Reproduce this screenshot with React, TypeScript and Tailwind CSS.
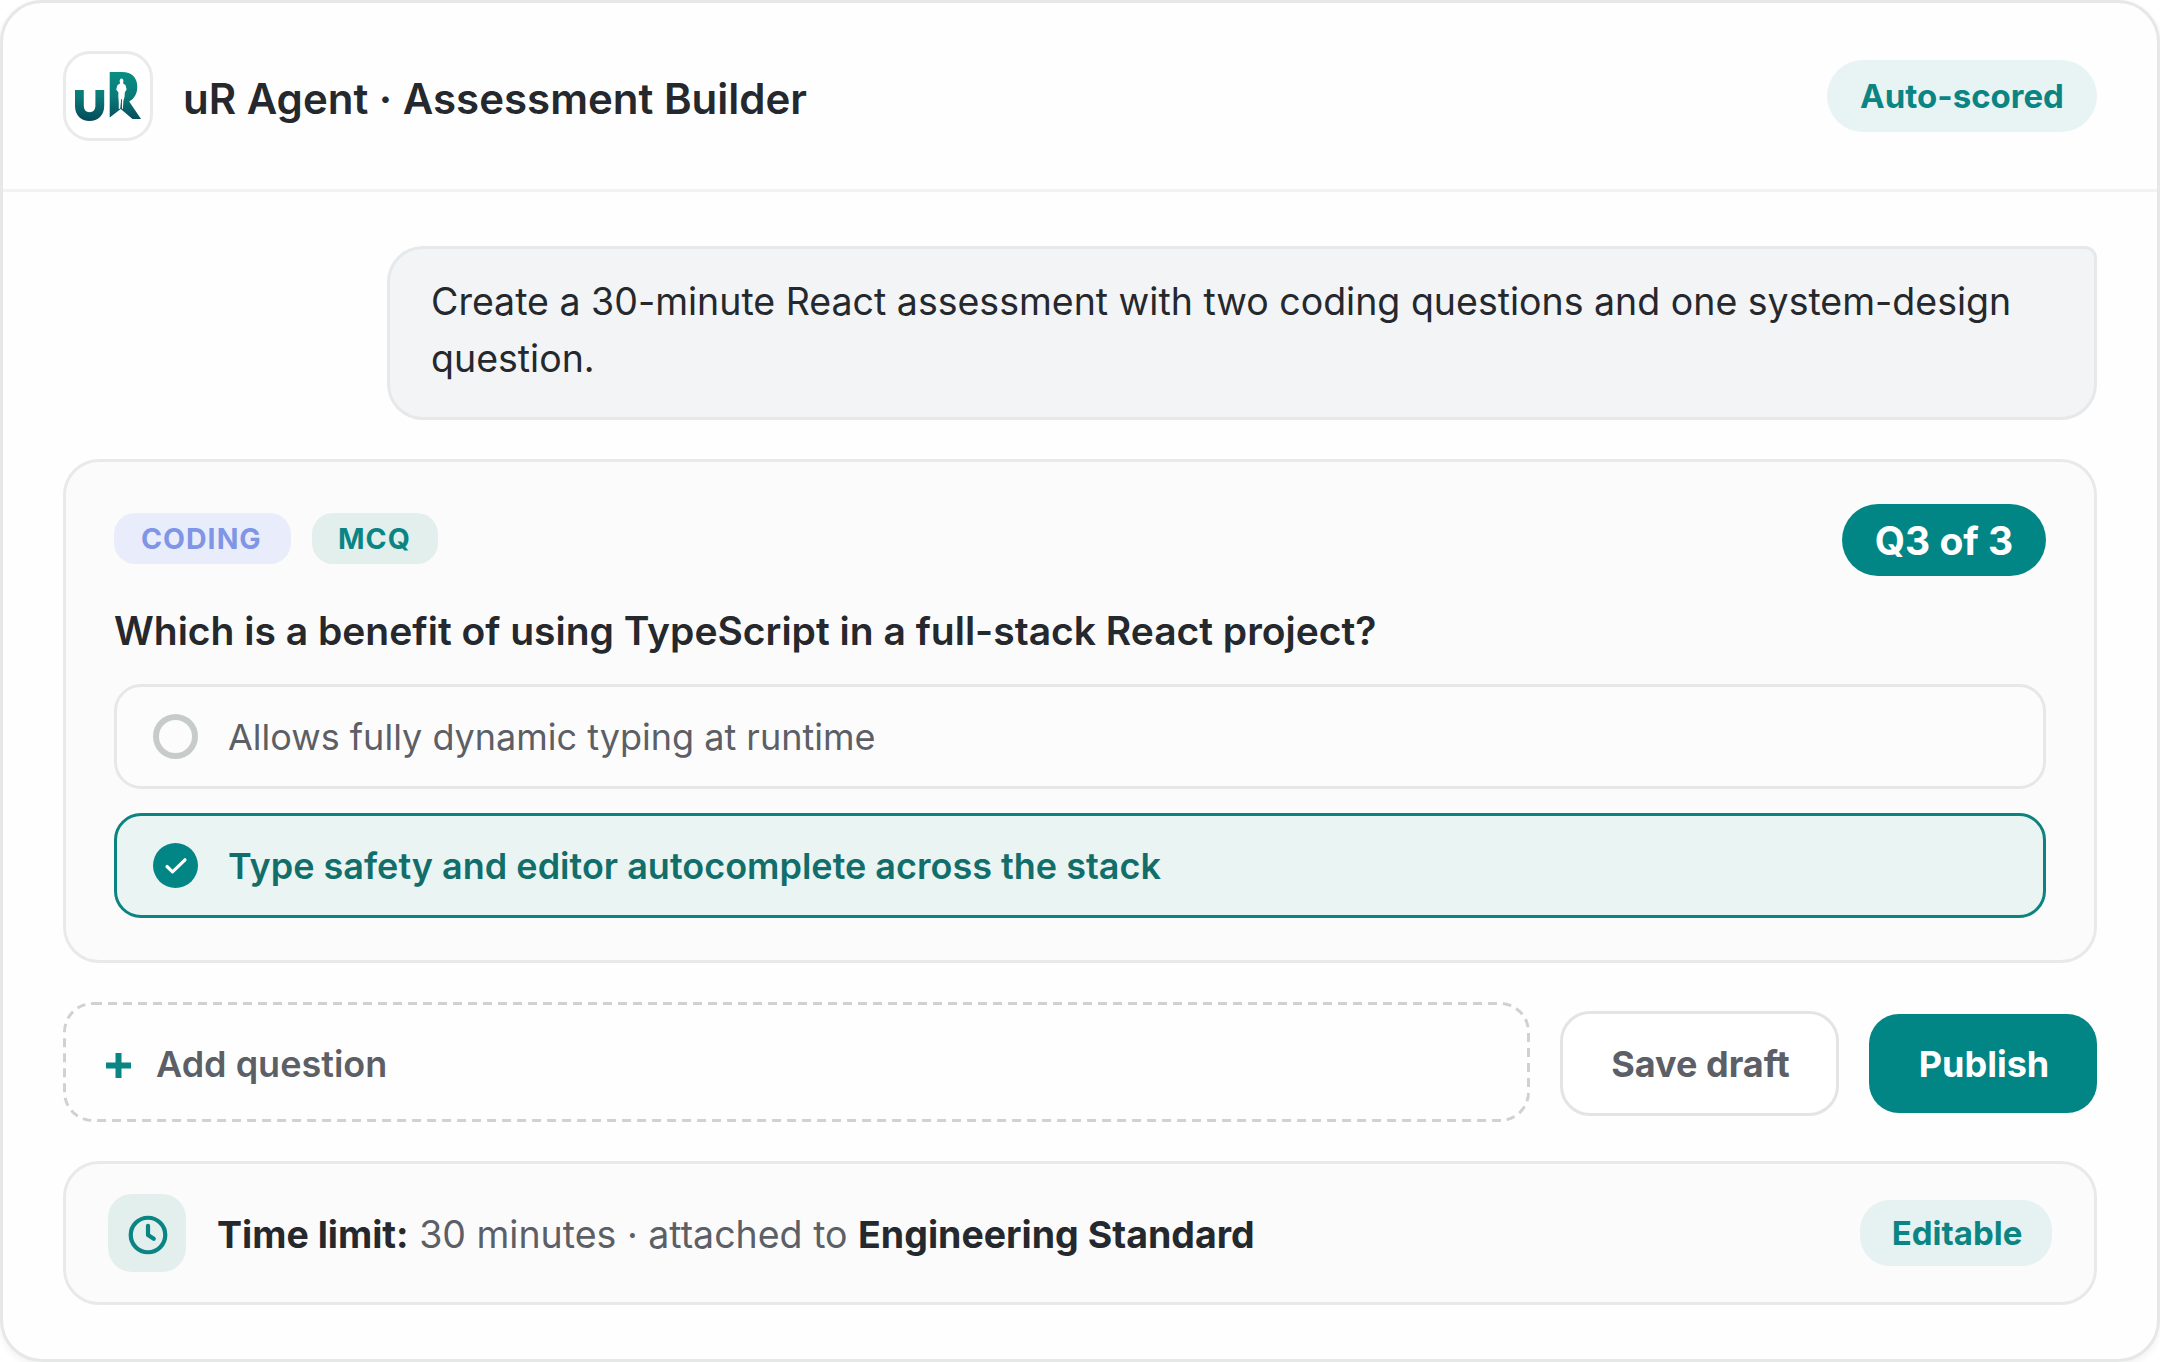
import type { ReactNode } from "react";

type Option = {
  label: string;
  selected: boolean;
};

const options: Option[] = [
  { label: "Allows fully dynamic typing at runtime", selected: false },
  { label: "Type safety and editor autocomplete across the stack", selected: true },
];

function Logo() {
  return (
    <svg viewBox="0 0 66 49" className="h-[49px] w-[66px]" aria-hidden="true">
      <defs>
        <linearGradient id="mark" x1="0" y1="0" x2="0" y2="49" gradientUnits="userSpaceOnUse">
          <stop offset="0" stopColor="#098e84" />
          <stop offset="0.5" stopColor="#0b7a78" />
          <stop offset="1" stopColor="#044a5a" />
        </linearGradient>
      </defs>
      <path
        d="M0 18H8.800V33.500C8.800 37.800 11 40.200 14.600 40.200C18.200 40.200 20.400 37.800 20.400 33.500V18H29.200V34C29.200 43 23 49 14.600 49C6 49 0 43 0 34Z"
        fill="url(#mark)"
      />
      <path
        d="M34.700 0H47C57 0 62.300 6 62.300 14.500C62.300 21.500 59.500 26.500 54.200 29.500L66 47H57.500L45.700 37L34.700 45.500Z"
        fill="url(#mark)"
      />
      <path
        d="M46.600 6.500C48.400 6.500 48.900 8.800 48 11.200L50.600 13.200L51.600 17.500L49.800 20.500L49.600 24.500L48.400 29L47.900 36.500L47 37V27H46.200L45.200 36.500L43.800 37L43.700 29L43.300 24.500L43.400 20.500L41.200 17.500L42.400 13.200L45.200 11.200C44.200 8.800 44.800 6.500 46.600 6.500Z"
        fill="#fff"
      />
    </svg>
  );
}

function Tag({ className, children }: { className: string; children: ReactNode }) {
  return (
    <span
      className={`flex h-[51px] items-center rounded-[21px] pt-0.5 text-[28.5px] font-bold tracking-[1px] ${className}`}
    >
      {children}
    </span>
  );
}

function OptionRow({ label, selected }: Option) {
  return (
    <div
      className={`flex h-[105px] items-center gap-[30px] rounded-[27px] border-3 px-9 text-[36px] ${
        selected
          ? "border-[#0d837f] bg-[#eaf5f3] font-semibold text-[#126e6a]"
          : "border-[#e6e8e8] bg-[#fcfcfc] text-[#5c5f66]"
      }`}
    >
      {selected ? (
        <span className="flex size-[45px] items-center justify-center rounded-full bg-[#028585]">
          <svg viewBox="0 0 24 18" className="h-[18px] w-6" fill="none" aria-hidden="true">
            <path
              d="M3 9.500L8.500 14.800L21 2.800"
              stroke="#fff"
              strokeWidth="3.200"
              strokeLinecap="round"
              strokeLinejoin="round"
            />
          </svg>
        </span>
      ) : (
        <span className="size-[45px] rounded-full border-6 border-[#c8cbcc]" />
      )}
      <span>{label}</span>
    </div>
  );
}

export default function App() {
  return (
    <div className="h-[1362px] w-[2160px] overflow-hidden bg-white font-['Inter',sans-serif] text-[#25282d]">
      <div className="flex h-full flex-col rounded-[42px] border-3 border-[#e6e7e7] bg-[#fefefe] shadow-[0_3px_9px_rgba(0,0,0,0.06)]">
        <header className="flex h-[189px] items-center justify-between border-b-3 border-[#f1f3f3] px-[60px]">
          <div className="flex items-center gap-[30px]">
            <div className="flex size-[90px] items-center justify-center rounded-[27px] border-3 border-[#e9eaea] bg-white">
              <Logo />
            </div>
            <h1 className="pt-1 text-[42px] font-semibold">uR Agent · Assessment Builder</h1>
          </div>
          <span className="flex h-[72px] w-[270px] items-center justify-center rounded-full bg-[#e8f4f3] pt-0.5 text-[33px] font-bold text-[#0a8583]">
            Auto-scored
          </span>
        </header>

        <main className="flex flex-1 flex-col gap-[39px] px-[60px] pt-[54px]">
          <div className="flex h-[174px] w-[1710px] self-end rounded-[36px] rounded-tr-[12px] border-3 border-[#e6e8ea] bg-[#f2f4f5] pt-[24px] pr-[36px] pl-[41px]">
            <p className="text-[37.5px] leading-[57px]">
              Create a 30-minute React assessment with two coding questions and one system-design
              question.
            </p>
          </div>

          <section className="h-[504px] rounded-[36px] border-3 border-[#e8eaea] bg-[#fbfbfb] px-12 pt-[42px]">
            <div className="flex h-[72px] items-center justify-between">
              <div className="flex gap-[21px] pb-[3px]">
                <Tag className="w-[177px] bg-[#e9edfb] pl-[27px] text-[#7f95e6]">CODING</Tag>
                <Tag className="w-[126px] bg-[#e3efed] pl-[26px] text-[#0a8583]">MCQ</Tag>
              </div>
              <span className="flex h-[72px] w-[204px] items-center justify-center rounded-full bg-[#028585] pt-0.5 text-[39px] font-bold text-white">
                Q3 of 3
              </span>
            </div>
            <h2 className="mt-[29px] h-[79px] text-[39px] leading-[51px] font-semibold">
              Which is a benefit of using TypeScript in a full-stack React project?
            </h2>
            <div className="flex flex-col gap-6">
              {options.map((option) => (
                <OptionRow key={option.label} {...option} />
              ))}
            </div>
          </section>

          <div className="flex h-[120px] items-center gap-[30px] text-[36px] font-semibold">
            <button
              type="button"
              className="relative flex h-[120px] flex-1 items-center gap-[25px] pt-[3px] pl-[43px] text-[#5c5f66]"
            >
              {/* scaled up so the dashes keep their 3:2 rhythm */}
              <span className="absolute top-0 left-0 h-1/3 w-1/3 origin-top-left scale-300 rounded-[10px] border border-dashed border-[#cfd2d3]" />
              <svg viewBox="0 0 25 25" className="mt-[3px] size-[25px]" aria-hidden="true">
                <path d="M12.500 0V25M0 12.500H25" stroke="#0a8583" strokeWidth="6" />
              </svg>
              Add question
            </button>
            <button
              type="button"
              className="mt-[3px] h-[105px] w-[279px] rounded-[30px] border-3 border-[#e2e4e5] bg-white pl-0.5 font-bold text-[#5c5f66]"
            >
              Save draft
            </button>
            <button
              type="button"
              className="mt-[3px] h-[99px] w-[228px] rounded-[30px] bg-[#028585] pl-0.5 font-bold text-white"
            >
              Publish
            </button>
          </div>

          <section className="flex h-36 items-center rounded-[36px] border-3 border-[#e8eaea] bg-[#fbfbfb] px-[42px]">
            <span className="flex size-[78px] items-center justify-center rounded-3xl bg-[#e3efed] pt-[3px] pl-0.5">
              <svg viewBox="0 0 24 24" className="size-[46px]" fill="none" aria-hidden="true">
                <g stroke="#0a8583" strokeWidth="2.200" strokeLinecap="round" strokeLinejoin="round">
                  <circle cx="12" cy="12" r="9" />
                  <path d="M12 7.200V12L15 14" />
                </g>
              </svg>
            </span>
            <p className="ml-[31px] flex-1 pt-[5px] text-[37.5px] text-[#5c5f66]">
              <strong className="font-bold text-[#25282d]">Time limit:</strong> 30 minutes · attached to{" "}
              <strong className="font-bold text-[#25282d]">Engineering Standard</strong>
            </p>
            <span className="flex h-[66px] w-48 items-center justify-center rounded-[30px] bg-[#e6f2f1] pt-0.5 pl-0.5 text-[33px] font-bold text-[#0a8583]">
              Editable
            </span>
          </section>
        </main>
      </div>
    </div>
  );
}
